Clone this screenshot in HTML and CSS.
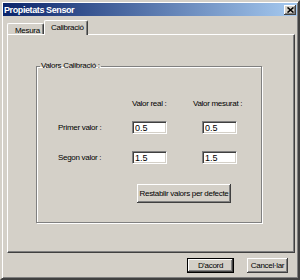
FILE: index.html
```html
<!DOCTYPE html>
<html lang="ca">
<head>
    <meta charset="UTF-8">
    <meta name="viewport" content="width=device-width, initial-scale=1.0">
    <title>Propietats Sensor</title>
    <link rel="stylesheet" href="styles.css">
</head>
<body>
    <div class="window">
        <div class="titlebar">
            <span class="title">Propietats Sensor</span>
            <span class="close">
                <svg width="7" height="6" viewBox="0 0 7 6"><path d="M0.5 0.5 L6.5 5.5 M6.5 0.5 L0.5 5.5" stroke="#000" stroke-width="1.6"/></svg>
            </span>
        </div>
        <div class="content">
            <div class="tabs">
                <div class="tab">Mesura</div>
                <div class="tab active">Calibració</div>
            </div>
            <div class="panel">
                <fieldset class="group">
                    <legend>Valors Calibració :</legend>
                    <div class="grid">
                        <span></span>
                        <span class="head">Valor real :</span>
                        <span class="head">Valor mesurat :</span>

                        <span class="label">Primer valor :</span>
                        <input class="field" type="text" value="0.5">
                        <input class="field second" type="text" value="0.5">

                        <span class="label">Segon valor :</span>
                        <input class="field" type="text" value="1.5">
                        <input class="field second" type="text" value="1.5">

                        <button class="btn reset">Restablir valors per defecte</button>
                    </div>
                </fieldset>
            </div>
            <div class="actions">
                <button class="btn default">D'acord</button>
                <button class="btn">Cancel·lar</button>
            </div>
        </div>
    </div>
</body>
</html>
```

FILE: styles.css
```css
body {
    margin: 0;
    background: #d4d0c8;
    font-family: "Liberation Sans", Arial, sans-serif;
    font-size: 8px;
    letter-spacing: -0.3px;
    color: #000;
}
.window {
    box-sizing: border-box;
    width: 300px;
    height: 280px;
    padding: 1px;
    border: 2px solid;
    border-color: #d4d0c8 #404040 #404040 #d4d0c8;
    box-shadow: inset 1px 1px #fff, inset -1px -1px #808080;
    background: #d4d0c8;
}
.titlebar {
    display: flex;
    align-items: center;
    justify-content: space-between;
    height: 13px;
    padding-left: 1px;
    background: linear-gradient(to right, #0a246a, #a6caf0);
}
.title {
    color: #fff;
    font-weight: bold;
    font-size: 9px;
    letter-spacing: -0.4px;
}
.close {
    display: flex;
    align-items: center;
    justify-content: center;
    box-sizing: border-box;
    width: 12px;
    height: 10px;
    margin-right: 1px;
    background: #d4d0c8;
    box-shadow: inset -1px -1px #404040, inset 1px 1px #fff, inset -2px -2px #808080;
}
.content {
    padding: 0 2px 0 4px;
}
.tabs {
    display: flex;
    align-items: flex-end;
    height: 14px;
    margin-top: 4px;
}
.tab {
    box-sizing: border-box;
    height: 11px;
    width: 37px;
    padding: 2px 0 0 7px;
    border-top: 1px solid #fff;
    border-left: 1px solid #fff;
    box-shadow: inset -1px 0 #808080;
    border-right: 1px solid #404040;
    border-radius: 2px 2px 0 0;
}
.tab.active {
    position: relative;
    z-index: 1;
    width: 44px;
    height: 15px;
    margin-bottom: -1px;
    padding: 2px 0 0 6px;
    background: #d4d0c8;
}
.panel {
    box-sizing: border-box;
    height: 219px;
    padding-top: 26px;
    border-top: 1px solid #fff;
    border-left: 1px solid #fff;
    border-right: 1px solid #404040;
    border-bottom: 1px solid #404040;
    box-shadow: inset -1px -1px #808080;
}
.group {
    box-sizing: border-box;
    width: 226px;
    margin: 0 0 0 28px;
    padding: 0 0 19px 0;
    border: 1px solid #808080;
    box-shadow: inset 1px 1px #fff, 1px 1px #fff;
}
.group legend {
    margin-left: 3px;
    padding: 0 1px;
    line-height: 10px;
}
.grid {
    display: grid;
    grid-template-columns: 74px 61px auto;
    grid-template-rows: 22px 30px 33px auto;
    align-items: start;
    margin: 28px 0 0 21px;
}
.head {
    line-height: 10px;
}
.label {
    line-height: 13px;
}
.field {
    box-sizing: border-box;
    width: 35px;
    height: 13px;
    margin: 0;
    padding: 0 2px;
    border: 1px solid;
    border-color: #808080 #fff #fff #808080;
    box-shadow: inset 1px 1px #404040, inset -1px -1px #d4d0c8;
    background: #fff;
    font-family: "Liberation Sans", Arial, sans-serif;
    font-size: 9px;
    outline: none;
}
.field.second {
    margin-left: 9px;
}
.btn {
    box-sizing: border-box;
    height: 15px;
    margin: 0;
    padding: 0;
    border: none;
    background: #d4d0c8;
    box-shadow: inset -1px -1px #404040, inset 1px 1px #fff, inset -2px -2px #808080;
    font-family: "Liberation Sans", Arial, sans-serif;
    font-size: 8px;
    letter-spacing: -0.3px;
    color: #000;
}
.reset {
    grid-column: 2 / 4;
    width: 94px;
    height: 19px;
    margin-left: 5px;
}
.actions {
    display: flex;
    justify-content: flex-end;
    gap: 13px;
    margin-top: 5px;
    padding-right: 7px;
}
.actions .btn {
    width: 41px;
}
.actions .btn.default {
    width: 47px;
    border: 1px solid #000;
}
```
